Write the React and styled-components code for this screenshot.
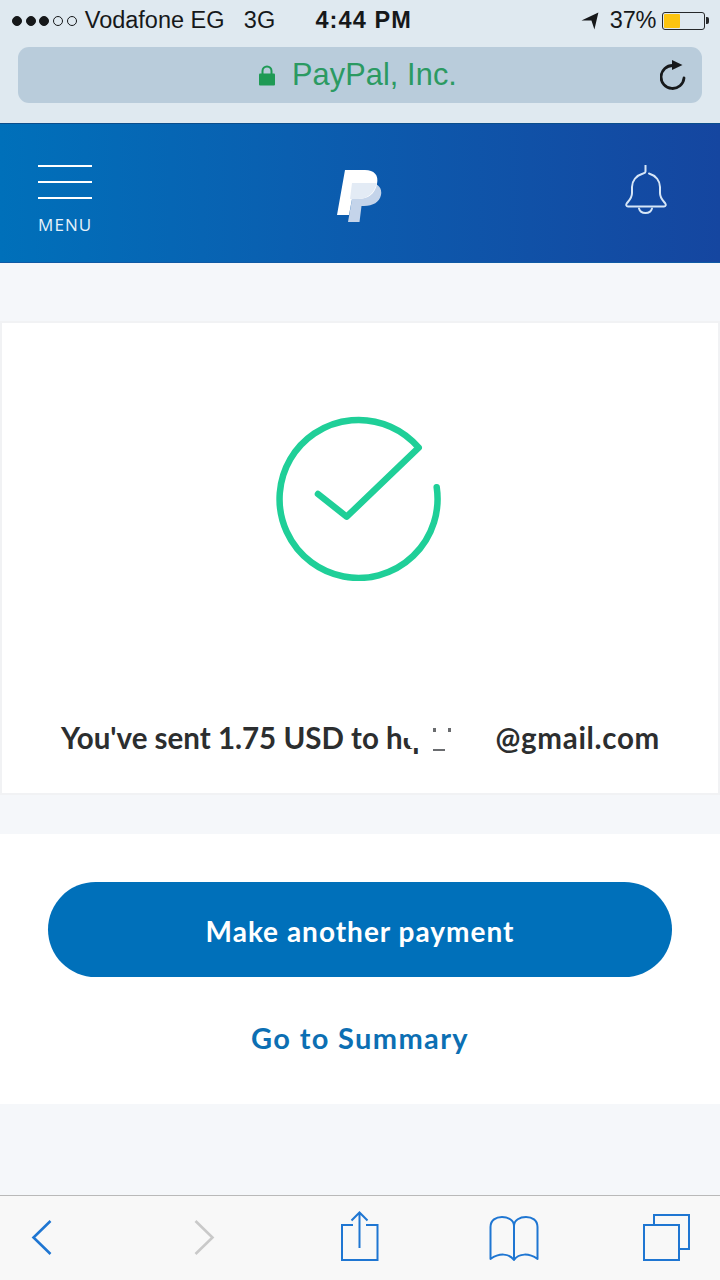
import React from "react";
import styled, { createGlobalStyle } from "styled-components";

const Global = createGlobalStyle`
  html, body { margin: 0; padding: 0; background: #f5f7fa; }
  body { width: 720px; height: 1280px; overflow: hidden; font-family: "Liberation Sans", Arial, sans-serif; }
`;
const Page = styled.div`
  width: 720px; height: 1280px; display: flex; flex-direction: column; background: #f5f7fa; overflow: hidden;
`;
const Chrome = styled.div`
  height: 123px; box-sizing: border-box; background: #dfe9f0; padding: 0 18px; display: flex; flex-direction: column;
`;
const StatusBar = styled.div`
  height: 47px; margin: 0 -18px; padding: 0 10px 6px 12px; box-sizing: border-box; display: flex; align-items: center;
  font-size: 23.5px; color: #16181a; white-space: nowrap;
`;
const Dots = styled.div`display: flex; gap: 3.7px; margin-right: 8px;`;
const Dot = styled.span`
  width: 10px; height: 10px; border-radius: 50%; box-sizing: border-box; border: 1px solid #16181a;
  background: ${p => (p.$on ? "#16181a" : "transparent")};
`;
const Carrier = styled.span`width: 160px;`;
const Network = styled.span`width: 72px;`;
const Clock = styled.span`font-weight: 700; letter-spacing: 1.1px; width: 267px;`;
const Percent = styled.span`margin: 0 6px 0 11px; letter-spacing: -0.2px;`;
const Battery = styled.span`
  position: relative; width: 43px; height: 18px; box-sizing: border-box; border: 1.5px solid #26282a; border-radius: 3px; padding: 1px; display: flex; margin-right: 5px;
  &::after { content: ""; position: absolute; right: -5px; top: 4px; width: 3px; height: 7px; background: #26282a; border-radius: 0 2px 2px 0; }
`;
const BatteryFill = styled.span`width: 16px; background: #fcc40f; border-radius: 1px;`;
const UrlBar = styled.div`
  height: 56px; border-radius: 11px; background: #b9ccdb; display: flex; align-items: center; position: relative; justify-content: center; padding-right: 4px;
`;
const UrlText = styled.span`font-size: 30.7px; color: #2b9a62; margin-left: 17px; letter-spacing: 0.1px;`;
const Reload = styled.svg`position: absolute; right: 14px; top: 12px;`;

const Header = styled.header`
  height: 140px; box-sizing: border-box; background: linear-gradient(90deg, #0070ba 0%, #0a5fb0 40%, #1546a0 100%);
  border-top: 1px solid #0b4e8c; border-bottom: 1px solid #0f5aa5;
  display: flex; justify-content: space-between; align-items: flex-start; padding: 41px 53px 0 38px;
`;
const MenuButton = styled.div`display: flex; flex-direction: column; width: 54px;`;
const MenuLine = styled.span`height: 2px; background: #fff; margin-bottom: 14px;`;
const MenuLabel = styled.span`
  font-family: "Open Sans", sans-serif; color: #e6f2fb; font-size: 17px; letter-spacing: 1.1px; line-height: 20px; margin-top: 2px;
`;
const Logo = styled.svg`margin-top: 5px;`;

const Card = styled.section`
  margin-top: 58px; height: 474px; box-sizing: border-box; background: #fff; border: 2px solid #f1f2f4;
  display: flex; flex-direction: column; align-items: center; padding-top: 92px;
`;
const Check = styled.svg`margin-right: 5px;`;
const Message = styled.p`
  margin: 139px 0 0 1px; font-family: Lato, sans-serif; font-weight: 700; font-size: 29.5px; line-height: 36px; color: #2c2e2f; white-space: nowrap;
`;
const ClippedLetter = styled.span`
  display: inline-block; clip-path: polygon(0 50%, 45% 50%, 45% 78%, 100% 78%, 100% 100%, 0 100%);
`;
const Redacted = styled.span`
  position: relative; display: inline-block; width: 76px; height: 1px;
`;
const Speck = styled.span`
  position: absolute; left: ${p => p.$x}px; top: ${p => p.$y}px; width: ${p => p.$w}px; height: ${p => p.$h}px; background: #6a6c6f;
`;
const Domain = styled.span`letter-spacing: 0.7px;`;
const Actions = styled.section`
  margin-top: 39px; height: 270px; box-sizing: border-box; background: #fff; padding: 48px 48px 0;
  display: flex; flex-direction: column; align-items: center;
`;
const Primary = styled.button`
  width: 100%; height: 95px; border: 0; border-radius: 48px; background: #0070ba; color: #fff; padding: 2px 0 0;
  font-family: Lato, sans-serif; font-weight: 700; font-size: 28px; letter-spacing: 1px;
`;
const Secondary = styled.a`
  margin-top: 43px; color: #0c6fb3; font-family: Lato, sans-serif; font-weight: 700; font-size: 29px; line-height: 36px; letter-spacing: 1.35px;
`;
const Toolbar = styled.nav`
  margin-top: auto; height: 85px; box-sizing: border-box; background: #f8f8f8; border-top: 1px solid #b9b9b9;
  display: flex; align-items: flex-start; padding-top: 10px;
`;
const Tool = styled.svg`flex: none; margin-left: ${p => p.$gap}px; margin-top: ${p => p.$top}px;`;

const blue = "#1f76d2";

export default function App() {
  return (
    <Page>
      <Global />
      <Chrome>
        <StatusBar>
          <Dots>{[1, 1, 1, 0, 0].map((on, i) => <Dot key={i} $on={!!on} />)}</Dots>
          <Carrier>Vodafone EG</Carrier>
          <Network>3G</Network>
          <Clock>4:44 PM</Clock>
          <svg width="18" height="18" viewBox="0 0 18 18"><path d="M0.5 8.5 L17.5 0.5 L13.5 17.5 L10.5 8.5 Z" fill="#16181a" /></svg>
          <Percent>37%</Percent>
          <Battery><BatteryFill /></Battery>
        </StatusBar>
        <UrlBar>
          <svg width="16" height="21" viewBox="0 0 16 21"><path d="M3.5 9V6a4.5 4.5 0 0 1 9 0v3" fill="none" stroke="#1f9a55" strokeWidth="2" /><rect y="8.5" width="16" height="12" rx="1" fill="#1f9a55" /></svg>
          <UrlText>PayPal, Inc.</UrlText>
          <Reload width="28" height="32" viewBox="0 0 28 32">
            <path d="M24 19 A11.500 11.500 0 1 1 13 6.500" fill="none" stroke="#17191b" strokeWidth="2.8" strokeLinecap="round" />
            <path d="M12 1 L22.500 6 L12 11 Z" fill="#17191b" />
          </Reload>
        </UrlBar>
      </Chrome>
      <Header>
        <MenuButton>
          <MenuLine /><MenuLine /><MenuLine />
          <MenuLabel>MENU</MenuLabel>
        </MenuButton>
        <Logo width="46" height="53" viewBox="336 170 46 53">
          <path d="M352 183 H369 C377 183 382.500 187 381 195 C379.500 202 373 206 364 206 H361.500 L359.500 222 H348 L352 199 Z" fill="#c4d4ea" />
          <path d="M345 170 H365 C374 170 379 175 377 184 C375 194 368 199 358 199 H352 L349 215 H337 Z" fill="#fff" />
          <path d="M352 183 H376.800 C374.500 193 367.500 199 358 199 H350 Z" fill="#e3ebf5" />
        </Logo>
        <svg width="42" height="49" viewBox="0 0 42 49" fill="none" stroke="#d6e6f7" strokeWidth="2" strokeLinecap="round" strokeLinejoin="round">
          <path d="M20.500 0.500 V6.500 C20.500 8 19.500 8 18 8.500 C11 10.500 7 16 7 22 V28 C7 33 4.500 35 2 38 C0.500 40 1.500 41.500 3 41.500 H39 C40.500 41.500 41.500 40 40 38 C37.500 35 35 33 35 28 V22 C35 16 31 10.500 24 8.500" />
          <path d="M14 43.500 C15 47 18 48 20.500 48 C23 48 26 47 27 43.500" />
        </svg>
      </Header>
      <Card>
        <Check width="166" height="166" viewBox="275 415 166 166" fill="none" stroke="#1fcf98" strokeWidth="6.5" strokeLinecap="round" strokeLinejoin="round">
          <path d="M436.700 487.300 A79 79 0 1 1 418.700 447.700 L346.700 516.700 L318 494" />
        </Check>
        <Message>
          You've sent 1.75 USD to h<ClippedLetter>q</ClippedLetter>
          <Redacted>
            <Speck $x={14} $y={-20} $w={3} $h={4} />
            <Speck $x={29} $y={-20} $w={3} $h={4} />
            <Speck $x={14} $y={1} $w={12} $h={2} />
          </Redacted>
          <Domain>@gmail.com</Domain>
        </Message>
      </Card>
      <Actions>
        <Primary>Make another payment</Primary>
        <Secondary>Go to Summary</Secondary>
      </Actions>
      <Toolbar>
        <Tool $gap={31} $top={14} width="21" height="35" viewBox="0 0 21 35" fill="none" stroke={blue} strokeWidth="2.6"><path d="M19.500 1 L2.500 17.500 L19.500 34" /></Tool>
        <Tool $gap={142} $top={14} width="21" height="35" viewBox="0 0 21 35" fill="none" stroke="#c9c9c9" strokeWidth="2.6"><path d="M1.500 1 L18.500 17.500 L1.500 34" /></Tool>
        <Tool $gap={126} $top={5} width="38" height="50" viewBox="0 0 38 50" fill="none" stroke={blue} strokeWidth="2"><path d="M12 14 H1 V49 H36.500 V14 H25" /><path d="M18.500 37 V1.500 M10.500 9.500 L18.500 1.500 L26.500 9.500" /></Tool>
        <Tool $gap={110} $top={9} width="50" height="46" viewBox="0 0 50 46" fill="none" stroke={blue} strokeWidth="2" strokeLinejoin="round"><path d="M25 45 C20 38 10 38 1.500 44 V12 C1.500 5 7 2 13 2 C19 2 25 5 25 11 C25 5 31 2 37 2 C43 2 48.500 5 48.500 12 V44 C40 38 30 38 25 45 Z M25 11 V45" /></Tool>
        <Tool $gap={104} $top={8} width="48" height="47" viewBox="0 0 48 47" fill="none" stroke={blue} strokeWidth="2"><path d="M11 11 V1 H46 V35 H36" /><rect x="1" y="11" width="35" height="35" /></Tool>
      </Toolbar>
    </Page>
  );
}
